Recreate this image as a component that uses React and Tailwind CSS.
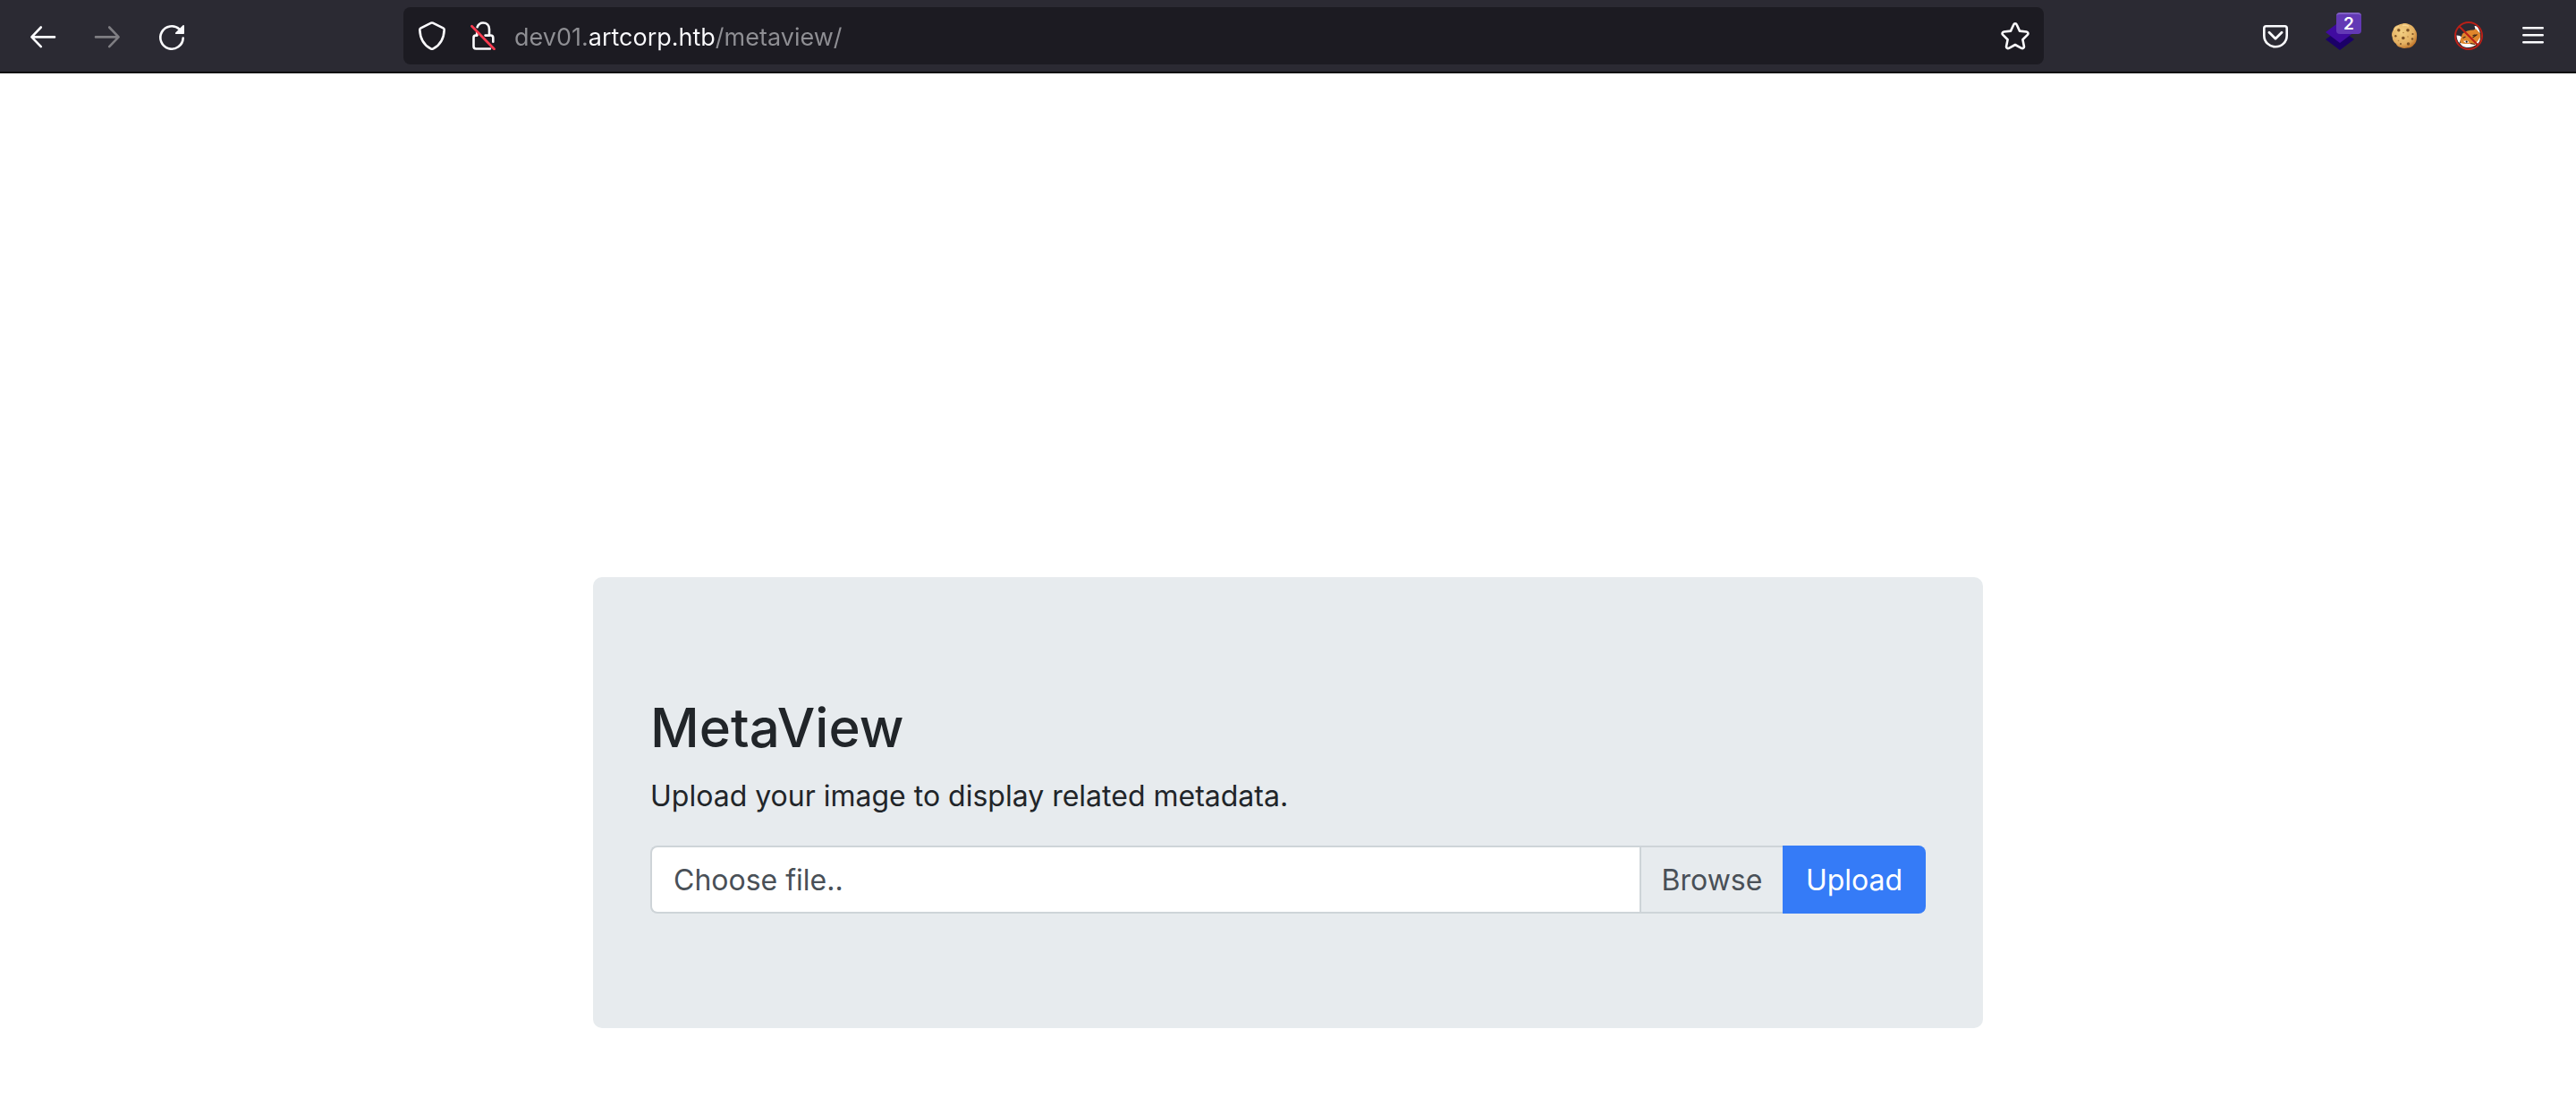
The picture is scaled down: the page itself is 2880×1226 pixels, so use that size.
import React from "react";

function BackIcon() {
  return (
    <svg className="w-8 h-8" viewBox="0 0 32 32" fill="none" stroke="currentColor" strokeWidth="2.6" strokeLinecap="round" strokeLinejoin="round" aria-hidden="true">
      <path d="M29 17.400H3.600M13.800 6.500 3.400 17.400l10.400 10.700" />
    </svg>
  );
}

function ForwardIcon() {
  return (
    <svg className="w-8 h-8" viewBox="0 0 32 32" fill="none" stroke="currentColor" strokeWidth="2.6" strokeLinecap="round" strokeLinejoin="round" aria-hidden="true">
      <path d="M3 17.400h25.400M18.200 6.500l10.400 10.900-10.400 10.700" />
    </svg>
  );
}

function ReloadIcon() {
  return (
    <svg className="w-8 h-8 overflow-visible" viewBox="0 0 32 32" fill="none" aria-hidden="true">
      <path d="M28.700 18.600A12.700 12.700 0 1 1 24.600 8.600" stroke="currentColor" strokeWidth="2.6" strokeLinecap="round" />
      <path d="M30 5v8.200a.8.8 0 0 1-.8.8h-8.300c-.9 0-1.300-1-.7-1.600l8.300-8.200c.6-.6 1.500-.1 1.500.800Z" fill="currentColor" />
    </svg>
  );
}

function ShieldIcon() {
  return (
    <svg className="w-8 h-8" viewBox="0 0 32 32" fill="none" stroke="currentColor" strokeWidth="2.6" strokeLinejoin="round" aria-hidden="true">
      <path d="M15 1.700c.6-.300 1.300-.300 1.900 0l11.600 5.600c.8.400 1.200 1.100 1.200 1.900-.4 9.800-4.300 16.900-12.300 21.200-.9.500-2 .5-2.900 0C6.500 26.100 2.700 19 2.300 9.200c0-.8.400-1.500 1.200-1.900L15 1.700Z" />
    </svg>
  );
}

function InsecureLockIcon() {
  return (
    <svg className="w-8 h-8" viewBox="0 0 32 32" fill="none" stroke="currentColor" strokeWidth="2.6" strokeLinecap="round" strokeLinejoin="round" aria-hidden="true">
      <path d="M10.600 6.200C11.800 3.200 14.200 1.500 17 1.500c4.200 0 7 3 7 7v7h1.500c1.700 0 2.800 1.100 2.800 2.800v4.400" />
      <path d="M19.600 15.600H24" />
      <path d="M10.200 15.600H8.800C7.300 15.600 6.500 16.500 6.500 18v9.800c0 1.600 1 2.700 2.600 2.700h15.800" />
      <path d="M10.200 12v3.600" />
      <path d="M4.500 5.300 29.500 30.800" stroke="#ff3b50" strokeWidth="2.700" />
    </svg>
  );
}

function StarIcon() {
  return (
    <svg className="w-8 h-8" viewBox="0 0 32 32" fill="none" stroke="currentColor" strokeWidth="2.600" strokeLinejoin="round" aria-hidden="true">
      <path d="M14.300 3.500c.7-1.600 2.700-1.600 3.400 0l3.300 7.100 7.700.9c1.700.2 2.300 2.200 1.100 3.400l-5.400 5.300 1.500 7.500c.3 1.700-1.400 2.900-2.900 2.100L16 26l-7 3.800c-1.500.8-3.200-.4-2.900-2.100l1.500-7.500-5.400-5.300C1 13.700 1.600 11.700 3.300 11.500l7.700-.9 3.300-7.100Z" />
    </svg>
  );
}

function PocketIcon() {
  return (
    <svg className="w-8 h-8" viewBox="0 0 32 32" fill="none" stroke="currentColor" strokeWidth="2.600" strokeLinecap="round" strokeLinejoin="round" aria-hidden="true">
      <path d="M5.500 5.300h21c1.300 0 2.200.9 2.200 2.200v8.200c0 7.200-5.600 12.500-12.700 12.500S3.300 22.900 3.300 15.700V7.500c0-1.300.9-2.200 2.200-2.200Z" />
      <path d="m9 12.200 7 7 7-7" strokeWidth="2.800" />
    </svg>
  );
}

function LayersIcon() {
  return (
    <svg className="w-8 h-8" viewBox="0 0 32 32" aria-hidden="true">
      <path d="M16 8.500 32 20 16 32 0 20Z" fill="#1b0068" />
      <path d="M16 0 32 12 16 24 0 12Z" fill="#400ba0" />
    </svg>
  );
}

function CookieIcon() {
  return (
    <svg className="w-8 h-8" viewBox="0 0 32 32" aria-hidden="true">
      <defs>
        <radialGradient id="cookieDough" cx="0.4" cy="0.35" r="0.72">
          <stop offset="0" stopColor="#f3d083" />
          <stop offset="0.65" stopColor="#e3b062" />
          <stop offset="1" stopColor="#b96b21" />
        </radialGradient>
      </defs>
      <path d="M14 2.400c3-.8 5 .1 7.600.8 3.300.9 5.600 3.400 6.700 6.400 1.700 2.400 2.100 5 1.700 8-.1 3.400-.8 6.200-3.300 8.500-1.800 2.400-4 3.600-7 3.400-2.500.7-5.200.8-7.600-.5-2.700-.2-4.300-1.700-5.300-4-2.600-1.700-4-4.200-4.100-7.200C1.500 15 2 12.300 3.500 10 4 6.700 6.200 4.600 9.200 4c1.400-1 3.200-1.400 4.800-1.600Z" fill="url(#cookieDough)" />
      <path d="M5 9.500c1-2.300 2.700-3.600 5-4.400M14 4.500c2.600-.5 5-.2 7 .9" stroke="#ffe6a8" strokeWidth="1.500" fill="none" opacity="0.6" />
      <g fill="#7d5225">
        <circle cx="9.800" cy="9.800" r="1.700" />
        <circle cx="20" cy="9.800" r="1.800" />
        <circle cx="14.800" cy="18.500" r="1.800" />
        <circle cx="6.300" cy="16.200" r="1.200" />
        <circle cx="20.500" cy="25" r="1.700" />
        <circle cx="25.500" cy="14" r="1.100" />
        <circle cx="25" cy="19.500" r="1.200" />
        <circle cx="12" cy="25" r="1" />
      </g>
      <g fill="#b98442">
        <circle cx="15" cy="12.500" r="0.800" />
        <circle cx="20" cy="17" r="0.800" />
        <circle cx="9.500" cy="21.500" r="0.800" />
      </g>
    </svg>
  );
}

function FoxOffIcon() {
  return (
    <svg className="w-8 h-8" viewBox="0 0 32 32" aria-hidden="true">
      <path d="M22.500 5.300c2.300-1.300 4.700 1.500 6.300 7.500l-4.300-.5Z" fill="#fff" />
      <path d="M2.500 15.500c2.300-.1 4.500.8 6 2.300L5.500 24C3.500 21.700 2.500 18.700 2.500 15.500Z" fill="#fff" />
      <path d="M6.300 21.500 9 13.700c3.500-2.900 7.500-4.200 12.500-4.200l2.700-1.300 4.800 5.500c.9 4.600-.4 8.500-3.500 11.500L20 28.500 8 26Z" fill="#e0862c" />
      <path d="M5.500 23.500c3.500 1.400 6.700 1.800 10.500 1.500l8.500.8c-4.300 3.500-11.500 4.500-16 1.200Z" fill="#fff" />
      <path d="M28.500 17.500c-1 3-2.700 5.300-5 6.800l2.500.7c2-2 3-4.500 2.500-7.500Z" fill="#fff" />
      <path d="m9.700 21.700 5-.2 2 2-4 .6Z" fill="#fff" />
      <circle cx="13.700" cy="22.700" r="1.100" fill="#1a1b22" />
      <path d="m20.500 18 5-3.500M20.500 15.800l3-1M9.500 18.500l3-1.500M18 24.500l5 1" stroke="#3a2417" strokeWidth="1.100" fill="none" />
      <path d="m5.500 5.500 21 21" stroke="#ba2018" strokeWidth="2.200" />
      <circle cx="16" cy="16" r="15" fill="none" stroke="#ba2018" strokeWidth="2" />
    </svg>
  );
}

function MenuIcon() {
  return (
    <svg className="w-8 h-8" viewBox="0 0 32 32" fill="none" stroke="currentColor" strokeWidth="2.600" strokeLinecap="round" aria-hidden="true">
      <path d="M5.300 7.300h21.400M5.300 15.300h21.400M5.300 23.300h21.400" />
    </svg>
  );
}

function ToolButton({ label, disabled, children }) {
  return (
    <button
      type="button"
      aria-label={label}
      disabled={disabled}
      className="relative flex h-16 w-16 items-center justify-center rounded-lg text-[#fbfbfe] disabled:text-[#7f7e83]"
    >
      {children}
    </button>
  );
}

function Toolbar() {
  return (
    <header className="flex h-[82px] items-center border-b-2 border-[#0c0c0d] bg-[#2b2a33] px-4">
      <nav aria-label="History" className="flex gap-2">
        <ToolButton label="Back"><BackIcon /></ToolButton>
        <ToolButton label="Forward" disabled><ForwardIcon /></ToolButton>
        <ToolButton label="Reload"><ReloadIcon /></ToolButton>
      </nav>
      <div className="mx-[227px] flex h-16 flex-1 items-center rounded-lg bg-[#1c1b22] px-4 text-[#fbfbfe]">
        <button type="button" aria-label="Tracking protection"><ShieldIcon /></button>
        <button type="button" aria-label="Connection not secure" className="ml-6"><InsecureLockIcon /></button>
        <input
          type="text"
          aria-label="Address"
          defaultValue="dev01.artcorp.htb/metaview/"
          className="ml-5 h-16 min-w-0 flex-1 bg-[linear-gradient(90deg,#8f8f94_82px,#fbfbfe_82px,#fbfbfe_224px,#8f8f94_224px)] bg-clip-text pt-0.5 font-['Inter',sans-serif] text-[27px] text-transparent outline-none"
        />
        <button type="button" aria-label="Bookmark this page"><StarIcon /></button>
      </div>
      <div className="flex gap-2">
        <ToolButton label="Save to Pocket"><PocketIcon /></ToolButton>
        <ToolButton label="Layers extension, 2 items">
          <LayersIcon />
          <span className="absolute left-7 top-1.5 h-6 w-7 rounded-sm border-t-2 border-[#8060c5] bg-[#6339b5] text-center font-['Inter',sans-serif] text-[19px] font-semibold leading-[22px] text-white">2</span>
        </ToolButton>
        <ToolButton label="Cookie editor"><CookieIcon /></ToolButton>
        <ToolButton label="Proxy disabled"><FoxOffIcon /></ToolButton>
        <ToolButton label="Open menu"><MenuIcon /></ToolButton>
      </div>
    </header>
  );
}

function UploadCard() {
  return (
    <section className="mx-auto w-full max-w-[1554px] rounded-[10px] bg-[#e7ebee] px-16 py-32 text-[#212529]">
      <h1 className="mb-3 text-[60px] font-medium leading-[80px]">MetaView</h1>
      <p className="mb-[30px] text-[32px] leading-[50px]">Upload your image to display related metadata.</p>
      <form className="flex h-[76px] text-[32px] leading-[48px] text-[#495057]" onSubmit={(e) => e.preventDefault()}>
        <input id="image" type="file" accept="image/*" className="sr-only" />
        <label htmlFor="image" className="flex flex-1 cursor-pointer items-stretch overflow-hidden rounded-l-lg border-y-2 border-l-2 border-[#ced4d8] bg-white">
          <span className="flex flex-1 items-center px-6 pt-0.5">Choose file..</span>
          <span className="flex w-40 items-center justify-center border-l-2 border-[#ced4d8] bg-[#e7ebee] pt-0.5">Browse</span>
        </label>
        <button type="submit" className="w-40 rounded-r-lg bg-[#357bf7] pt-0.5 text-white">Upload</button>
      </form>
    </section>
  );
}

export default function App() {
  return (
    <div className="min-h-screen bg-white font-['Inter',sans-serif]">
      <Toolbar />
      <main className="pt-[563px]">
        <UploadCard />
      </main>
    </div>
  );
}
